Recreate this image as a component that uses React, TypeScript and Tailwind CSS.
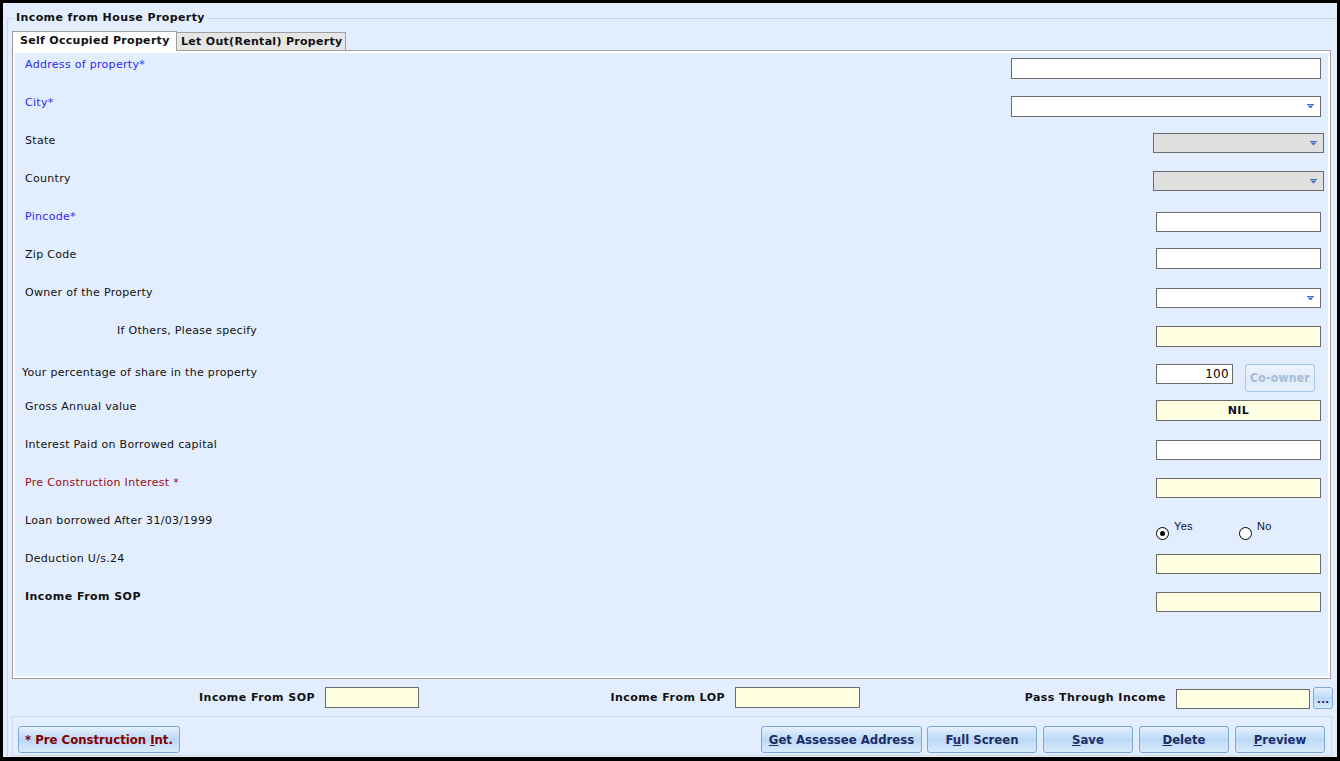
import React from "react";

const FONT = "font-['DejaVu_Sans',sans-serif]";
const BTNFONT = "font-['DejaVu_Sans_Condensed','DejaVu_Sans',sans-serif]";

function Arrow() {
  return (
    <svg width="7" height="5" viewBox="0 0 7 5" className="shrink-0">
      <rect x="0" y="0" width="7" height="1" fill="#3f6fc2" />
      <path d="M0.5 1.5 L6.5 1.5 L3.5 4.5 Z" fill="#3f6fc2" />
    </svg>
  );
}

type Ctrl =
  | { kind: "input"; w: number; h: number; bg: string; text?: string; mt: number; mr: number }
  | { kind: "select"; w: number; h: number; bg: string; mt: number; mr: number }
  | { kind: "percent"; mt: number }
  | { kind: "radio"; mt: number };

type Row = {
  label: string;
  color: string;
  bold?: boolean;
  pl: number;
  lt: number;
  ctrl: Ctrl;
};

const BLUE = "text-[#2b2bff]";
const BLACK = "text-[#111111]";
const RED = "text-[#9a0a14]";

const rows: Row[] = [
  { label: "Address of property*", color: BLUE, pl: 10, lt: 5, ctrl: { kind: "input", w: 310, h: 21, bg: "bg-white", mt: 5, mr: 7 } },
  { label: "City*", color: BLUE, pl: 10, lt: 5, ctrl: { kind: "select", w: 310, h: 21, bg: "bg-white", mt: 5, mr: 7 } },
  { label: "State", color: BLACK, pl: 10, lt: 5, ctrl: { kind: "select", w: 171, h: 20, bg: "bg-[#dfdfdf]", mt: 4, mr: 4 } },
  { label: "Country", color: BLACK, pl: 10, lt: 5, ctrl: { kind: "select", w: 171, h: 20, bg: "bg-[#dfdfdf]", mt: 4, mr: 4 } },
  { label: "Pincode*", color: BLUE, pl: 10, lt: 5, ctrl: { kind: "input", w: 165, h: 20, bg: "bg-white", mt: 7, mr: 7 } },
  { label: "Zip Code", color: BLACK, pl: 10, lt: 5, ctrl: { kind: "input", w: 165, h: 21, bg: "bg-white", mt: 5, mr: 7 } },
  { label: "Owner of the Property", color: BLACK, pl: 10, lt: 5, ctrl: { kind: "select", w: 165, h: 20, bg: "bg-white", mt: 7, mr: 7 } },
  { label: "If Others, Please specify", color: BLACK, pl: 102, lt: 5, ctrl: { kind: "input", w: 165, h: 21, bg: "bg-[#ffffe1]", mt: 7, mr: 7 } },
  { label: "Your percentage of share in the property", color: BLACK, pl: 7, lt: 9, ctrl: { kind: "percent", mt: 7 } },
  { label: "Gross Annual value", color: BLACK, pl: 10, lt: 5, ctrl: { kind: "input", w: 165, h: 21, bg: "bg-[#ffffe1]", text: "NIL", mt: 5, mr: 7 } },
  { label: "Interest Paid on Borrowed capital", color: BLACK, pl: 10, lt: 5, ctrl: { kind: "input", w: 165, h: 20, bg: "bg-white", mt: 7, mr: 7 } },
  { label: "Pre Construction Interest *", color: RED, pl: 10, lt: 5, ctrl: { kind: "input", w: 165, h: 20, bg: "bg-[#ffffe1]", mt: 7, mr: 7 } },
  { label: "Loan borrowed After 31/03/1999", color: BLACK, pl: 10, lt: 5, ctrl: { kind: "radio", mt: 11 } },
  { label: "Deduction U/s.24", color: BLACK, pl: 10, lt: 5, ctrl: { kind: "input", w: 165, h: 20, bg: "bg-[#ffffe1]", mt: 7, mr: 7 } },
  { label: "Income From SOP", color: BLACK, bold: true, pl: 10, lt: 5, ctrl: { kind: "input", w: 165, h: 20, bg: "bg-[#ffffe1]", mt: 7, mr: 7 } },
];

function Radio({ checked }: { checked?: boolean }) {
  return (
    <span className="mt-[7px] flex h-[13px] w-[13px] shrink-0 items-center justify-center rounded-full border border-black bg-white">
      {checked && <span className="h-[5px] w-[5px] rounded-full bg-black" />}
    </span>
  );
}

function Control({ c }: { c: Ctrl }) {
  if (c.kind === "input") {
    return (
      <div
        className={`box-border flex items-center justify-center border border-[#6b6b6b] ${c.bg} text-[11px] font-bold tracking-[0.4px] text-[#0c0c2a]`}
        style={{ width: c.w, height: c.h, marginTop: c.mt, marginRight: c.mr }}
      >
        {c.text}
      </div>
    );
  }
  if (c.kind === "select") {
    return (
      <div
        className={`box-border flex items-center justify-end border border-[#6b6b6b] ${c.bg} pr-[6px]`}
        style={{ width: c.w, height: c.h, marginTop: c.mt, marginRight: c.mr }}
      >
        <Arrow />
      </div>
    );
  }
  if (c.kind === "percent") {
    return (
      <div className="mr-[13px] flex items-start gap-[12px]" style={{ marginTop: c.mt }}>
        <div className="box-border flex h-[20px] w-[77px] items-center justify-end border border-[#6b6b6b] bg-white pr-[3px] text-[12px] text-black">
          100
        </div>
        <div className={`${BTNFONT} box-border flex h-[28px] w-[70px] items-center justify-center rounded-[3px] border border-[#a9c6ea] bg-gradient-to-b from-[#edf4fd] via-[#e0ecfa] to-[#e9f2fd] text-[12px] font-bold text-[#a5bcd8]`}>
          Co-owner
        </div>
      </div>
    );
  }
  return (
    <div
      className="mr-[7px] flex w-[165px] items-start font-['Liberation_Sans',sans-serif] text-[11px] text-[#0c0c3a]"
      style={{ marginTop: c.mt }}
    >
      <Radio checked />
      <span className="ml-[5px] w-[65px] leading-[12px]">Yes</span>
      <Radio />
      <span className="ml-[5px] leading-[12px]">No</span>
    </div>
  );
}

function Btn({ w, children, red }: { w: number; children: React.ReactNode; red?: boolean }) {
  return (
    <div
      className={`${BTNFONT} box-border flex h-[27px] items-center justify-center rounded-[3px] border border-[#79a7e0] bg-gradient-to-b from-[#e6f1fd] via-[#bcd8f6] to-[#d9ebfc] text-[13px] font-bold ${
        red ? "text-[#850000]" : "text-[#1b2d66]"
      }`}
      style={{ width: w }}
    >
      <span>{children}</span>
    </div>
  );
}

export default function App() {
  return (
    <div className={`${FONT} box-border flex h-[761px] w-[1340px] border-x-[3px] border-t-[3px] border-b-[4px] border-black bg-[#e2eefd] text-[11px] leading-[14px] tracking-[0.3px]`}>
      <fieldset className="ml-[4px] mt-[8px] flex min-w-0 flex-1 flex-col border-l border-t border-[#cfd6df]">
        <legend className="ml-[6px] px-[2px] text-[11px] font-bold leading-[14px] tracking-[0.4px] text-[#111]">
          Income from House Property
        </legend>
        {/* tabs */}
        <div className="ml-[4px] mt-[6px] flex h-[19px] items-end">
          <div className="relative z-10 -mb-px box-border flex h-[20px] w-[165px] items-start border border-b-0 border-[#a0a0a0] bg-white pl-[7px] pt-[2px] text-[11px] font-bold tracking-[0.3px] text-[#111]">
            Self Occupied Property
          </div>
          <div className="box-border flex h-[18px] w-[169px] items-start border border-b-0 border-l-0 border-[#a0a0a0] bg-[#e6e6e6] pl-[4px] pt-[2px] text-[11px] font-bold tracking-[0.3px] text-[#111]">
            Let Out(Rental) Property
          </div>
        </div>
        {/* panel */}
        <div className="ml-[4px] box-border h-[629px] w-[1319px] border border-[#a0a0a0]">
          <div className="box-border flex h-full flex-col border-2 border-white">
            {rows.map((r, i) => (
              <div key={i} className="flex h-[38px] items-start justify-between">
                <div
                  className={`${r.color} ${r.bold ? "font-bold tracking-[0.45px]" : ""} leading-[14px]`}
                  style={{ paddingLeft: r.pl, paddingTop: r.lt }}
                >
                  {r.label}
                </div>
                <Control c={r.ctrl} />
              </div>
            ))}
          </div>
        </div>
        {/* bottom totals */}
        <div className="flex h-[37px] items-center text-[11px] font-bold tracking-[0.45px] text-[#111]">
          <div className="flex w-[411px] items-center justify-end gap-[10px]">
            <span>Income From SOP</span>
            <div className="box-border h-[21px] w-[94px] border border-[#6b6b6b] bg-[#ffffe1]" />
          </div>
          <div className="flex w-[441px] items-center justify-end gap-[10px]">
            <span>Income From LOP</span>
            <div className="box-border h-[21px] w-[125px] border border-[#6b6b6b] bg-[#ffffe1]" />
          </div>
          <div className="flex w-[473px] items-center justify-end">
            <span className="mr-[10px]">Pass Through Income</span>
            <div className="mt-[3px] box-border h-[20px] w-[134px] border border-[#6b6b6b] bg-[#ffffe1]" />
            <div className="ml-[3px] box-border flex h-[22px] w-[20px] items-end justify-center rounded-[3px] border border-[#79a7e0] bg-gradient-to-b from-[#e6f1fd] via-[#bcd8f6] to-[#d9ebfc] pb-[3px] text-[11px] font-bold leading-[10px] tracking-normal text-[#1b2d66]">
              ...
            </div>
          </div>
        </div>
        {/* bottom buttons */}
        <div className="ml-[4px] box-border flex h-[40px] w-[1320px] items-start border border-[#d3d9e1] pl-[5px] pr-[6px] pt-[9px] tracking-normal">
          <Btn w={162} red>
            * Pre Construction <u>I</u>nt.
          </Btn>
          <div className="ml-auto flex gap-[6px]">
            <div className="mr-[-1px]">
              <Btn w={161}>
                <u>G</u>et Assessee Address
              </Btn>
            </div>
            <Btn w={110}>
              F<u>u</u>ll Screen
            </Btn>
            <Btn w={90}>
              <u>S</u>ave
            </Btn>
            <Btn w={90}>
              <u>D</u>elete
            </Btn>
            <Btn w={90}>
              <u>P</u>review
            </Btn>
          </div>
        </div>
      </fieldset>
    </div>
  );
}
